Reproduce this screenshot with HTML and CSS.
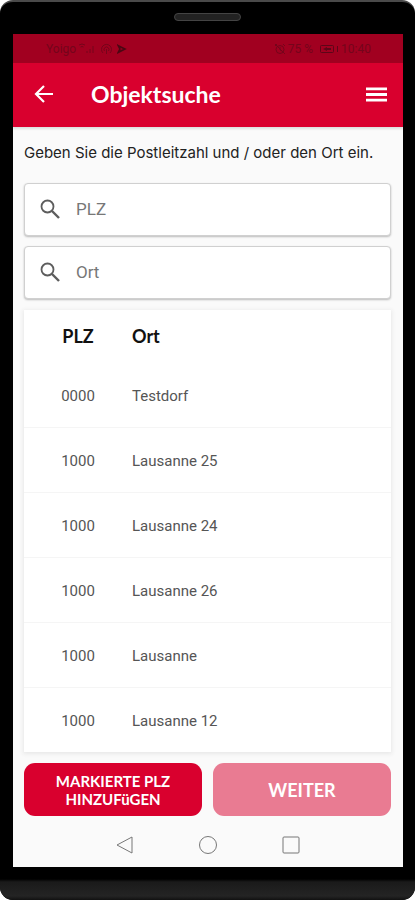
FILE: index.html
```html
<!DOCTYPE html>
<html lang="de">
<head>
<meta charset="utf-8">
<meta name="viewport" content="width=device-width, initial-scale=1">
<title>Objektsuche</title>
<link rel="stylesheet" href="styles.css">
</head>
<body>
<div class="phone">
  <div class="speaker-bar"><span class="speaker"></span></div>
  <div class="screen">
    <div class="status">
      <div class="status-group">
        <span>Yoigo</span>
        <svg width="20" height="12" viewBox="0 0 20 12"><path d="M1 2q3-2 6 0M2.500 4q1.500-1 3 0M9 10V8M12 10V6M15 10V3" fill="none" stroke="currentColor"/></svg>
        <svg width="13" height="12" viewBox="0 0 13 12"><path d="M3 10A5 5 0 1 1 10 10M4.500 8a2.500 2.500 0 1 1 4 0M6.500 6v5" fill="none" stroke="currentColor"/></svg>
        <svg class="play" width="10" height="10" viewBox="0 0 11 12"><path d="M1 2l8 4-8 4 2-4z" fill="none" stroke="currentColor" stroke-width="2"/></svg>
      </div>
      <div class="status-group">
        <svg width="12" height="12" viewBox="0 0 12 12"><circle cx="6" cy="6.500" r="4" fill="none" stroke="currentColor"/><path d="M1 3l2-2M11 3L9 1M6 4v3l2 1M1 1l10 10" fill="none" stroke="currentColor"/></svg>
        <span>75 %</span>
        <svg class="battery" width="20" height="12" viewBox="0 0 20 12"><rect x="1.500" y="2.500" width="13" height="7" rx="1" fill="none" stroke="currentColor"/><path d="M4 6l4-2v1h4v2H8v1zM18 3h1v6h-1z" fill="currentColor"/></svg>
        <span>10:40</span>
      </div>
    </div>
    <header class="appbar">
      <button class="icon-button" type="button" aria-label="Zurück">
        <svg width="20" height="18" viewBox="0 0 20 18"><path d="M19 9H2M10 1L2 9l8 8" fill="none" stroke="currentColor" stroke-width="2.200"/></svg>
      </button>
      <h1>Objektsuche</h1>
      <button class="icon-button" type="button" aria-label="Menü">
        <svg width="21" height="15" viewBox="0 0 21 15"><path d="M0 1.800h21M0 7.500h21M0 13.200h21" stroke="currentColor" stroke-width="2.800"/></svg>
      </button>
    </header>
    <main class="content">
      <p class="intro">Geben Sie die Postleitzahl und / oder den Ort ein.</p>
      <label class="search">
        <svg width="20" height="20" viewBox="0 0 20 20"><circle cx="7.500" cy="7.500" r="6" fill="none" stroke="currentColor" stroke-width="1.800"/><path d="M12 12l7 7" stroke="currentColor" stroke-width="2.400"/></svg>
        <input type="text" placeholder="PLZ" aria-label="PLZ">
      </label>
      <label class="search">
        <svg width="20" height="20" viewBox="0 0 20 20"><circle cx="7.500" cy="7.500" r="6" fill="none" stroke="currentColor" stroke-width="1.800"/><path d="M12 12l7 7" stroke="currentColor" stroke-width="2.400"/></svg>
        <input type="text" placeholder="Ort" aria-label="Ort">
      </label>
      <table class="results">
        <thead><tr><th class="zip">PLZ</th><th>Ort</th></tr></thead>
        <tbody>
          <tr><td class="zip">0000</td><td>Testdorf</td></tr>
          <tr><td class="zip">1000</td><td>Lausanne 25</td></tr>
          <tr><td class="zip">1000</td><td>Lausanne 24</td></tr>
          <tr><td class="zip">1000</td><td>Lausanne 26</td></tr>
          <tr><td class="zip">1000</td><td>Lausanne</td></tr>
          <tr><td class="zip">1000</td><td>Lausanne 12</td></tr>
        </tbody>
      </table>
      <div class="actions">
        <button class="action" type="button">MARKIERTE PLZ<br>HINZUFüGEN</button>
        <button class="action next" type="button" disabled>WEITER</button>
      </div>
    </main>
    <nav class="system-nav">
      <button type="button" aria-label="Zurück"><svg width="20" height="20" viewBox="0 0 20 20"><path d="M17 2v16L2 10z" fill="none" stroke="currentColor" stroke-linejoin="round"/></svg></button>
      <button type="button" aria-label="Startseite"><svg width="20" height="20" viewBox="0 0 20 20"><circle cx="10" cy="10" r="8.500" fill="none" stroke="currentColor"/></svg></button>
      <button type="button" aria-label="Übersicht"><svg width="20" height="20" viewBox="0 0 20 20"><rect x="2" y="2" width="16" height="16" rx="1" fill="none" stroke="currentColor"/></svg></button>
    </nav>
  </div>
  <div class="chin"></div>
</div>
</body>
</html>
```
FILE: styles.css
```css
* { box-sizing: border-box; }

body {
  margin: 0;
  background: #fff;
  font-family: Roboto, "Liberation Sans", sans-serif;
}

button {
  border: 0;
  padding: 0;
  background: none;
  color: inherit;
  font: inherit;
}

svg { display: block; flex: none; }

.phone {
  min-height: 100vh;
  display: flex;
  flex-direction: column;
  background: #000;
  border-top: 2px solid #4a4a4a;
  border-radius: 13px;
  overflow: hidden;
}

.speaker-bar {
  height: 32px;
  display: flex;
  justify-content: center;
  padding-top: 11px;
}

.speaker {
  width: 67px;
  height: 8px;
  border: 1px solid #444;
  border-radius: 4px;
  background: #222;
}

.screen {
  flex: 1;
  display: flex;
  flex-direction: column;
  margin: 0 12px 0 13px;
  background: #fafafa;
  overflow: hidden;
}

.status {
  height: 29px;
  display: flex;
  align-items: center;
  justify-content: space-between;
  padding: 0 32px 0 33px;
  background: #a10020;
  color: #74051b;
  font-size: 12px;
}

.status-group {
  display: flex;
  align-items: center;
  gap: 2px;
}

.play { margin-left: 2px; color: #4b0713; }
.battery { margin-left: 4px; color: #5c0618; }

.appbar {
  height: 64px;
  display: flex;
  align-items: center;
  padding: 0 16px 2px 21px;
  background: #d9002e;
  color: #fff;
  box-shadow: 0 2px 2px #dce0de;
}

.appbar h1 {
  flex: 1;
  margin: 0 0 0 37px;
  font: 700 23px/28px Lato, sans-serif;
}

.content {
  display: flex;
  flex-direction: column;
  padding: 0 12px 0 11px;
}

.intro {
  margin: 16px 0 20px;
  font: 400 15px/20px Inter, sans-serif;
  color: #222;
  white-space: nowrap;
}

.search {
  height: 53px;
  display: flex;
  align-items: center;
  gap: 16px;
  margin-bottom: 10px;
  padding: 0 15px 2px;
  border: 1px solid #d0d0d0;
  border-radius: 4px;
  background: #fff;
  box-shadow: 0 1px 2px #bbb;
  color: #5d5d5d;
}

.search input {
  flex: 1;
  min-width: 0;
  border: 0;
  padding: 0;
  outline: 0;
  background: none;
  font: 17px/24px Roboto, sans-serif;
}

.search input::placeholder { color: #777; opacity: 1; }

.results {
  margin-top: 1px;
  table-layout: fixed;
  width: 100%;
  border-spacing: 0;
  background: #fff;
  box-shadow: 0 1px 4px 1px #e8e8e8;
  color: #555;
  font-size: 15px;
  text-align: left;
}

.results th {
  height: 52px;
  padding: 0;
  color: #111;
  font: 700 18px/24px Lato, sans-serif;
}

.results td {
  height: 65px;
  padding: 1px 0 0;
  border-top: 1px solid #f5f5f5;
}

.results tbody tr:first-child td { border-top-color: transparent; }

.results .zip {
  width: 108px;
  text-align: center;
}

.actions {
  display: grid;
  grid-template-columns: 1fr 1fr;
  gap: 11px;
  margin-top: 11px;
}

.action {
  height: 53px;
  border-radius: 11px;
  background: #d9002e;
  color: #fff;
  font: 700 15px/18px Lato, sans-serif;
}

.next {
  background: #e97b92;
  font-size: 18px;
}

.system-nav {
  flex: 1;
  display: flex;
  align-items: center;
  justify-content: center;
  gap: 63px;
  padding-top: 6px;
  color: #777;
}

.chin {
  height: 33px;
  background: linear-gradient(#000 12px, #1a1a1a 15px, #242424 29px, #111);
}
```
